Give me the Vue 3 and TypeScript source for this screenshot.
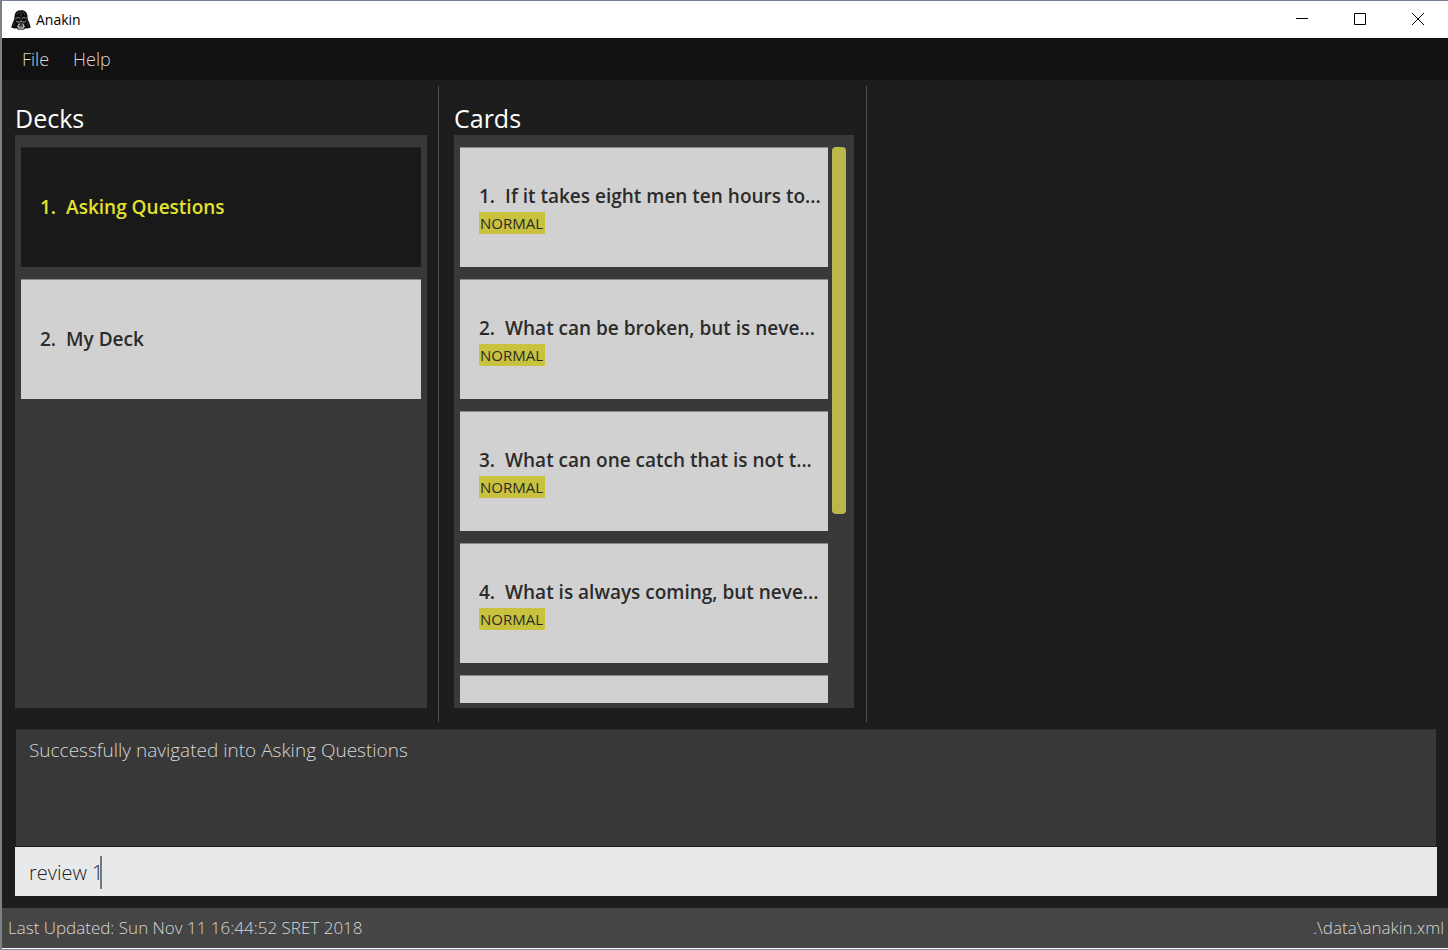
<script setup lang="ts">
import { ref } from 'vue'

interface Deck {
  id: number
  name: string
}

interface Card {
  id: number
  question: string
  level: string
}

const decks: Deck[] = [
  { id: 1, name: 'Asking Questions' },
  { id: 2, name: 'My Deck' },
]

const cards: Card[] = [
  { id: 1, question: 'If it takes eight men ten hours to...', level: 'NORMAL' },
  { id: 2, question: 'What can be broken, but is neve...', level: 'NORMAL' },
  { id: 3, question: 'What can one catch that is not t...', level: 'NORMAL' },
  { id: 4, question: 'What is always coming, but neve...', level: 'NORMAL' },
]

const selectedDeck = ref(1)
const command = ref('review 1')
</script>

<template>
  <div class="window">
    <header class="titlebar">
      <svg class="logo" viewBox="0 0 20 20" aria-hidden="true">
        <path d="M10 0.2C6.4 0.2 4 2 3.6 5.4L3.2 9.4 1.6 13 0.2 17.6 3.4 18.6 5.6 18.2 7 19.6 10 20 13 19.6 14.4 18.2 16.6 18.6 19.8 17.6 18.4 13 16.8 9.4 16.4 5.4C16 2 13.6 0.2 10 0.2Z" fill="#0c0c0c" />
        <path d="M6 4.8C6.4 3.4 7.2 2.4 8.6 2M14 4.8C13.6 3.4 12.8 2.4 11.4 2M10 2.2V6.6" fill="none" stroke="#5c5c5c" stroke-width="0.8" />
        <path d="M4.2 8.4L7 7.4 9.4 8.6M15.8 8.4L13 7.4 10.6 8.6" fill="none" stroke="#8c8c8c" stroke-width="0.9" />
        <path d="M4.8 10.8L6.4 12 8.4 11.8M15.2 10.8L13.6 12 11.6 11.8" fill="none" stroke="#a2a2a2" stroke-width="1" />
        <path d="M9 10.4H11L11.6 12.4H8.4Z" fill="#777" />
        <path d="M7.6 13.4L6.2 16.4 7.2 18.6 9 19.4H11L12.8 18.6 13.8 16.4 12.4 13.4" fill="#b8b8b8" />
        <path d="M10 12.2L12.4 16.4H7.6Z" fill="#202020" />
        <path d="M9 14V16.4M11 14V16.4" stroke="#777" stroke-width="0.5" />
        <path d="M8.4 17.8H11.6" stroke="#555" stroke-width="0.9" />
        <path d="M3.6 12.4L2.6 16.4M16.4 12.4L17.4 16.4" stroke="#444" stroke-width="0.8" />
      </svg>
      <h1 class="app-name">Anakin</h1>
      <div class="controls">
        <button type="button" aria-label="Minimize">
          <svg viewBox="0 0 12 12"><path d="M0 5.5H12" /></svg>
        </button>
        <button type="button" aria-label="Maximize">
          <svg viewBox="0 0 12 12"><path d="M0.5 0.5H11.5V11.5H0.5Z" /></svg>
        </button>
        <button type="button" aria-label="Close">
          <svg viewBox="0 0 12 12"><path d="M0 0L12 12M12 0L0 12" /></svg>
        </button>
      </div>
    </header>

    <nav class="menubar">
      <button type="button">File</button>
      <button type="button">Help</button>
    </nav>

    <main class="split">
      <section class="pane decks">
        <h2>Decks</h2>
        <div class="list">
          <ul>
            <li v-for="deck in decks" :key="deck.id">
              <button
                type="button"
                class="tile"
                :class="{ selected: deck.id === selectedDeck }"
                @click="selectedDeck = deck.id"
              >
                <span class="heading"><span>{{ deck.id }}.</span><span>{{ deck.name }}</span></span>
              </button>
            </li>
          </ul>
        </div>
      </section>

      <section class="pane cards">
        <h2>Cards</h2>
        <div class="list">
          <ul>
            <li v-for="card in cards" :key="card.id" class="tile">
              <span class="heading"><span>{{ card.id }}.</span><span>{{ card.question }}</span></span>
              <span class="badge">{{ card.level }}</span>
            </li>
            <li class="tile"></li>
          </ul>
          <div class="track"><div class="thumb"></div></div>
        </div>
      </section>

      <section class="pane"></section>
    </main>

    <div class="console">
      <output class="result">Successfully navigated into Asking Questions</output>
      <div class="command">
        <input v-model="command" type="text" aria-label="Command" spellcheck="false" />
        <span class="caret"></span>
      </div>
    </div>

    <footer class="status">
      <span>Last Updated: Sun Nov 11 16:44:52 SRET 2018</span>
      <span>.\data\anakin.xml</span>
    </footer>
  </div>
</template>

<style>
body {
  margin: 0;
}
</style>

<style scoped>
.window {
  box-sizing: border-box;
  display: flex;
  flex-direction: column;
  height: 100vh;
  min-height: 600px;
  border-top: 1px solid #76809a;
  border-left: 2px solid #7d8288;
  border-bottom: 1px solid #85859b;
  background: #1d1d1d;
  color: #d6d6d6;
  font-family: "Open Sans", "Noto Sans", sans-serif;
  font-weight: 300;
}

button,
input {
  margin: 0;
  border: 0;
  border-radius: 0;
  font: inherit;
}

h1,
h2,
ul {
  margin: 0;
  padding: 0;
  font-weight: 400;
}

ul {
  list-style: none;
}

.titlebar {
  display: flex;
  align-items: center;
  height: 37px;
  padding: 0 1px 0 9px;
  background: #fff;
  color: #000;
}

.logo {
  width: 20px;
  height: 20px;
}

.app-name {
  margin-left: 5px;
  font-size: 14px;
  line-height: 20px;
}

.controls {
  display: flex;
  height: 100%;
  margin-left: auto;
}

.controls button {
  display: flex;
  align-items: center;
  justify-content: center;
  width: 58px;
  padding: 0 0 1px;
  background: none;
}

.controls svg {
  width: 12px;
  height: 12px;
  fill: none;
  stroke: #000;
  stroke-width: 1;
}

.menubar {
  display: flex;
  gap: 24px;
  height: 42px;
  padding-left: 20px;
  background: #111;
}

.menubar button {
  padding: 0;
  background: none;
  color: #d6d6d6;
  font-size: 18px;
}

.split {
  display: grid;
  flex: 1;
  grid-template-columns: 437fr 428fr 581fr;
  min-height: 0;
  padding: 6px 0;
}

.pane {
  display: flex;
  flex-direction: column;
  box-sizing: border-box;
  min-width: 0;
  min-height: 0;
  padding: 16px 12px 14px 15px;
}

.decks {
  padding-right: 11px;
  padding-left: 13px;
}

.decks,
.cards {
  border-right: 1px solid #505050;
}

.pane h2 {
  color: #fff;
  font-size: 25px;
  line-height: 33px;
}

.list {
  display: flex;
  flex: 1;
  gap: 4px;
  min-height: 0;
  padding: 12px 6px 5px;
  background: #383838;
}

.list ul {
  display: flex;
  flex: 1;
  flex-direction: column;
  gap: 12px;
  min-width: 0;
  overflow: hidden;
}

.tile {
  display: flex;
  flex-direction: column;
  flex-shrink: 0;
  gap: 2px;
  align-items: flex-start;
  justify-content: center;
  box-sizing: border-box;
  width: 100%;
  height: 120px;
  padding: 0 0 0 19px;
  border-top: 1px solid #8a8a8a;
  background: #d1d1d1;
  color: #2b2b2b;
  text-align: left;
}

.decks .tile {
  padding-bottom: 2px;
}

.tile.selected {
  border-top-color: #262626;
  background: #191919;
  color: #e2e22f;
}

.heading {
  display: flex;
  gap: 10px;
  font-size: 19px;
  font-weight: 600;
  line-height: 28px;
  white-space: nowrap;
}

.badge {
  padding: 0 2px 0 1px;
  background: #c8c23f;
  font-size: 15px;
  font-weight: 400;
  line-height: 22px;
}

.track {
  width: 14px;
}

.cards .list {
  padding-right: 8px;
}

.thumb {
  height: 66%;
  border-radius: 4px;
  background: #bab84a;
}

.console {
  display: flex;
  flex-direction: column;
  gap: 1px;
  padding: 1px 11px 12px 13px;
}

.result {
  box-sizing: border-box;
  height: 117px;
  margin: 0 1px;
  padding: 7px 13px;
  border-top: 1px solid #303030;
  background: #383838;
  font-size: 19px;
  line-height: 26px;
}

.command {
  position: relative;
  display: flex;
}

.command input {
  box-sizing: border-box;
  width: 100%;
  height: 49px;
  padding: 2px 14px 0;
  outline: none;
  background: #e7e9eb;
  color: #222;
  font-size: 20px;
}

.caret {
  position: absolute;
  top: 9px;
  left: 85px;
  width: 2px;
  height: 33px;
  background: #777;
}

.status {
  display: flex;
  justify-content: space-between;
  padding: 0 4px 0 6px;
  border-bottom: 1px solid #fff;
  background: #454545;
  font-size: 17px;
  line-height: 40px;
}
</style>
